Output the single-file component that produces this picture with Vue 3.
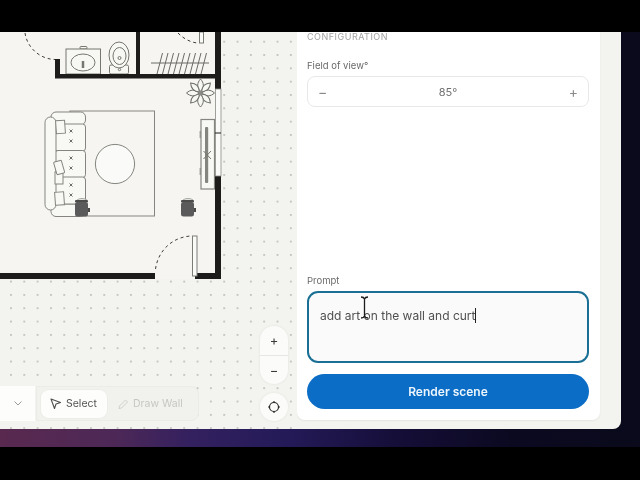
<script setup>
const seats = [124, 150.5, 177]
const marks = [131, 141, 158, 168, 185, 195]
const hangers = [157, 162.5, 168, 173.5, 179, 184.5, 190, 195.5, 201]
const petals = [0, 45, 90, 135, 180, 225, 270, 315]
</script>

<template>
  <div class="screen">
    <div class="topbar"></div>
    <div class="desktop">
      <main class="window">
        <section class="canvas">
          <svg class="plan" viewBox="0 32 297 397" width="297" height="397">
            <rect x="0" y="32" width="221" height="247" fill="#f6f5f2" />

            <!-- rug and table -->
            <rect x="70" y="111" width="84.5" height="105" fill="none" stroke="#85857f" stroke-width="1" />
            <circle cx="115" cy="164" r="19.6" fill="#fafaf8" stroke="#85857f" stroke-width="1" />

            <!-- sofa -->
            <g fill="#f8f8f5" stroke="#85857f" stroke-width="1">
              <rect x="51" y="112" width="34.500" height="13" rx="5" />
              <rect x="51" y="204" width="34.500" height="12.500" rx="5" />
              <rect v-for="y in seats" :key="y" x="55" :y="y" width="30.500" height="27" rx="3" />
              <rect x="45" y="117" width="11" height="93" rx="5.500" />
              <rect x="56" y="120.500" width="9" height="13" transform="rotate(-4 60 127)" />
              <rect x="55" y="172" width="8" height="12" />
              <rect x="55" y="192" width="9" height="13" transform="rotate(-4 60 198)" />
              <rect x="55" y="161" width="8" height="13" rx="1" transform="rotate(-16 59 167)" />
            </g>
            <g fill="none" stroke="#6f6f6a" stroke-width="1">
              <path v-for="y in marks" :key="y" :d="`M69.500 ${y - 1.500}l3 3m0-3l-3 3`" />
            </g>

            <!-- stools -->
            <g v-for="x in [75, 181]" :key="x">
              <path :d="`M${x + 2} 200a6 3.500 0 0 1 10 0`" fill="#e4e4e0" stroke="#9a9a95" stroke-width="0.8" />
              <rect :x="x" y="200" width="13" height="2.500" rx="1" fill="#4b4b4a" />
              <rect :x="x" y="202" width="13" height="14.500" rx="2.500" fill="#5a5a5a" />
              <rect :x="x + 13" y="208" width="2" height="4" fill="#4b4b4a" />
            </g>

            <!-- plant -->
            <g transform="translate(200.500 93)" fill="#f7f7f4" stroke="#6f6f6a" stroke-width="1">
              <path v-for="a in petals" :key="a" d="M0-1.500C-4-6-3.500-10 0-14C3.500-10 4-6 0-1.500Z" :transform="`rotate(${a})`" />
              <circle r="2.200" fill="#8a8a85" stroke="none" />
            </g>

            <!-- console and screen -->
            <rect x="199.500" y="131" width="2" height="7" fill="#a7a7a2" />
            <rect x="199.500" y="168" width="2" height="7" fill="#a7a7a2" />
            <rect x="201" y="119.500" width="13.500" height="69.500" fill="#f8f8f5" stroke="#858580" stroke-width="1.200" />
            <rect x="205" y="127" width="3.200" height="56" rx="1" fill="#85857f" />
            <path d="M203.500 151l7.500 8m0-8l-7.500 8" fill="none" stroke="#77776f" stroke-width="1" />

            <!-- bathroom -->
            <g fill="#f7f7f4" stroke="#77776f" stroke-width="1">
              <rect x="80" y="46.500" width="7" height="2.500" rx="1" />
              <rect x="66" y="49" width="34.500" height="25" />
              <ellipse cx="83" cy="62.500" rx="12" ry="8.500" />
              <rect x="109.500" y="65" width="19" height="9" rx="1.500" />
              <ellipse cx="119" cy="55" rx="10" ry="13" />
              <ellipse cx="119.500" cy="56" rx="6.500" ry="8.500" />
              <circle cx="119.500" cy="69.500" r="1.200" />
              <circle cx="119.500" cy="58" r="1.500" />
            </g>
            <path d="M83 61v7" stroke="#77776f" stroke-width="2.500" fill="none" />

            <!-- closet -->
            <g fill="none" stroke="#6a6a66" stroke-width="1">
              <path d="M151 63h58" />
              <path v-for="x in hangers" :key="x" :d="`M${x} 74l5.500-21`" />
            </g>

            <!-- walls -->
            <g fill="#1d1c1a">
              <rect x="215" y="32" width="6" height="57" />
              <rect x="215" y="176" width="6" height="103" />
              <rect x="55" y="74" width="160" height="4.500" />
              <rect x="55" y="59" width="5" height="19" />
              <rect x="136" y="32" width="4" height="42" />
              <rect x="0" y="273" width="155" height="6" />
              <rect x="195" y="273" width="20" height="6" />
            </g>
            <rect x="215.500" y="89" width="5.500" height="87" fill="#fafaf8" stroke="#8a8a85" stroke-width="0.800" />
            <path d="M215 133h6" stroke="#1d1c1a" stroke-width="1" />

            <!-- doors -->
            <rect x="192.500" y="236" width="4.500" height="40" fill="#fafaf8" stroke="#7d7d78" stroke-width="1" />
            <rect x="199.500" y="32" width="4" height="11" fill="#fafaf8" stroke="#7d7d78" stroke-width="1" />
            <g fill="none" stroke="#3f3f3c" stroke-width="1" stroke-dasharray="3 3">
              <path d="M155.500 269C158 251 172 237 191 236" />
              <path d="M25 33C27 47 39 59 55 59.500" />
              <path d="M178 33C184 39 190 42 197 43" />
            </g>
          </svg>

          <div class="toolbar">
            <div class="tool-select">
              <svg width="10" height="7" viewBox="0 0 10 7"><path d="M1.500 1.500 5 5l3.500-3.500" fill="none" stroke="#9a9a96" stroke-width="1" /></svg>
            </div>
            <div class="tool-group">
              <button class="tool active">
                <svg width="13" height="13" viewBox="0 0 13 13"><path d="M2 2l9.500 3.500-4.500 1.500-1.500 4.500z" fill="none" stroke="#4f4f4d" stroke-width="1.100" stroke-linejoin="round" /></svg>
                <span>Select</span>
              </button>
              <button class="tool">
                <svg width="12" height="12" viewBox="0 0 12 12"><path d="M2 10.500l.5-2.500 6-6 2 2-6 6z" fill="none" stroke="#cfcfcb" stroke-width="1" stroke-linejoin="round" /></svg>
                <span>Draw Wall</span>
              </button>
            </div>
          </div>

          <div class="zoom-group">
            <button class="zoom-btn">+</button>
            <button class="zoom-btn">−</button>
          </div>
          <button class="recenter">
            <svg width="14" height="14" viewBox="0 0 14 14"><circle cx="7" cy="7" r="4.500" fill="none" stroke="#2a2a2a" stroke-width="1.200" /><path d="M7 1v2M7 11v2M1 7h2M11 7h2" stroke="#2a2a2a" stroke-width="1.200" /></svg>
          </button>
        </section>

        <aside class="panel">
          <div class="eyebrow">CONFIGURATION</div>
          <label class="label fov-label">Field of view°</label>
          <div class="stepper">
            <span class="step">−</span>
            <span class="fov">85°</span>
            <span class="step">+</span>
          </div>
          <div class="spacer"></div>
          <label class="label prompt-label">Prompt</label>
          <div class="prompt">
            <span>add art on the wall and curt</span><i class="caret"></i>
            <svg class="ibeam" width="9" height="23" viewBox="0 0 9 23"><path d="M1 1c2 0 3 .5 3.500 2 .5-1.500 1.500-2 3.500-2M4.500 3v17M1 22c2 0 3-.5 3.500-2 .5 1.500 1.500 2 3.500 2" fill="none" stroke="#1c1c1c" stroke-width="1.300" /></svg>
          </div>
          <button class="render">Render scene</button>
        </aside>
      </main>
    </div>
    <div class="bottombar"></div>
  </div>
</template>

<style scoped>
.screen {
  width: 640px;
  height: 480px;
  overflow: hidden;
  display: flex;
  flex-direction: column;
  background: #000;
  font-family: Inter, "Liberation Sans", sans-serif;
}
.topbar {
  height: 32px;
  flex: none;
  background: #000;
}
.bottombar {
  height: 33px;
  flex: none;
  background: #000;
}
.desktop {
  height: 415px;
  flex: none;
  background: linear-gradient(90deg, #59294f 0%, #4d2857 18%, #33205f 30%, #241a58 45%, #150e38 62%, #0b0920 80%, #0a0a1c 100%);
}
.window {
  width: 621px;
  height: 397px;
  display: flex;
  background: #f3f3f0;
  border-bottom-right-radius: 8px;
  overflow: hidden;
  filter: blur(0.35px);
}
.canvas {
  position: relative;
  width: 297px;
  flex: none;
  background-color: #f3f3f0;
  background-image: radial-gradient(circle, #b8b8b1 0.6px, transparent 0.9px);
  background-size: 13.333px 13.333px;
  background-position: 4.3px 3px;
}
.plan {
  position: absolute;
  left: 0;
  top: 0;
  display: block;
}
.toolbar {
  position: absolute;
  left: 0;
  top: 354px;
  display: flex;
  height: 35px;
}
.tool-select {
  width: 35px;
  display: flex;
  align-items: center;
  justify-content: flex-end;
  padding-right: 12px;
  box-sizing: border-box;
  background: #fdfdfc;
}
.tool-group {
  width: 163px;
  margin-left: 1px;
  box-sizing: border-box;
  display: flex;
  align-items: center;
  gap: 2px;
  padding: 0 4px;
  background: #f1f1ee;
  border: 1px solid #ebebe7;
  border-radius: 0 8px 8px 0;
}
.tool {
  display: flex;
  align-items: center;
  gap: 4px;
  height: 28px;
  padding: 0 8px;
  border: 0;
  border-radius: 8px;
  background: transparent;
  color: #c6c6c2;
  white-space: nowrap;
  font: 400 10.500px Inter, "Liberation Sans", sans-serif;
}
.tool.active {
  width: 66px;
  flex: none;
  background: #fdfdfc;
  color: #555;
  box-shadow: 0 0 0 1px #ecece8;
}
.zoom-group {
  position: absolute;
  left: 260px;
  top: 294px;
  width: 28px;
  height: 58px;
  display: flex;
  flex-direction: column;
  border-radius: 14px;
  overflow: hidden;
  background: #fbfbf9;
  box-shadow: 0 0 3px rgba(0, 0, 0, 0.08);
}
.zoom-btn {
  flex: 1;
  padding: 0;
  border: 0;
  background: transparent;
  color: #3a3a3a;
  font: 400 13px Inter, "Liberation Sans", sans-serif;
}
.zoom-btn + .zoom-btn {
  border-top: 1px solid #e6e6e2;
}
.recenter {
  position: absolute;
  left: 260px;
  top: 361px;
  width: 28px;
  height: 28px;
  padding: 0;
  display: flex;
  align-items: center;
  justify-content: center;
  border: 0;
  border-radius: 50%;
  background: #fbfbf9;
  box-shadow: 0 0 3px rgba(0, 0, 0, 0.08);
}
.panel {
  width: 303px;
  height: 388px;
  flex: none;
  box-sizing: border-box;
  display: flex;
  flex-direction: column;
  padding: 0 11px 11px 10px;
  background: #fff;
  border-radius: 0 0 8px 8px;
  box-shadow: 0 1px 2px rgba(0, 0, 0, 0.06);
}
.eyebrow {
  height: 10px;
  line-height: 10px;
  font-size: 9px;
  letter-spacing: 0.5px;
  color: #a2a2a2;
}
.label {
  display: block;
  font-size: 9.500px;
  line-height: 12px;
  color: #6a6a6a;
}
.fov-label {
  margin-top: 18px;
}
.stepper {
  height: 31px;
  margin-top: 4px;
  flex: none;
  display: flex;
  align-items: center;
  justify-content: space-between;
  padding: 0 10px;
  border: 1px solid #e8e8e6;
  border-radius: 8px;
  box-sizing: border-box;
  color: #707070;
  font-size: 11px;
}
.step {
  font-size: 14px;
  color: #8a8a8a;
}
.spacer {
  flex: 1;
}
.prompt-label {
  margin-bottom: 4px;
}
.prompt {
  position: relative;
  height: 72px;
  flex: none;
  box-sizing: border-box;
  padding: 15px 11px;
  border: 2px solid #1a6f95;
  border-radius: 11px;
  background: #fafafa;
  font-size: 12px;
  line-height: 16px;
  color: #505050;
}
.caret {
  display: inline-block;
  width: 1px;
  height: 15px;
  vertical-align: -3px;
  background: #222;
}
.ibeam {
  position: absolute;
  left: 51px;
  top: 3px;
}
.render {
  height: 35px;
  flex: none;
  margin-top: 11px;
  border: 0;
  border-radius: 18px;
  background: #0b6dc5;
  color: #eef6fd;
  font: 600 12px Inter, "Liberation Sans", sans-serif;
}
</style>
